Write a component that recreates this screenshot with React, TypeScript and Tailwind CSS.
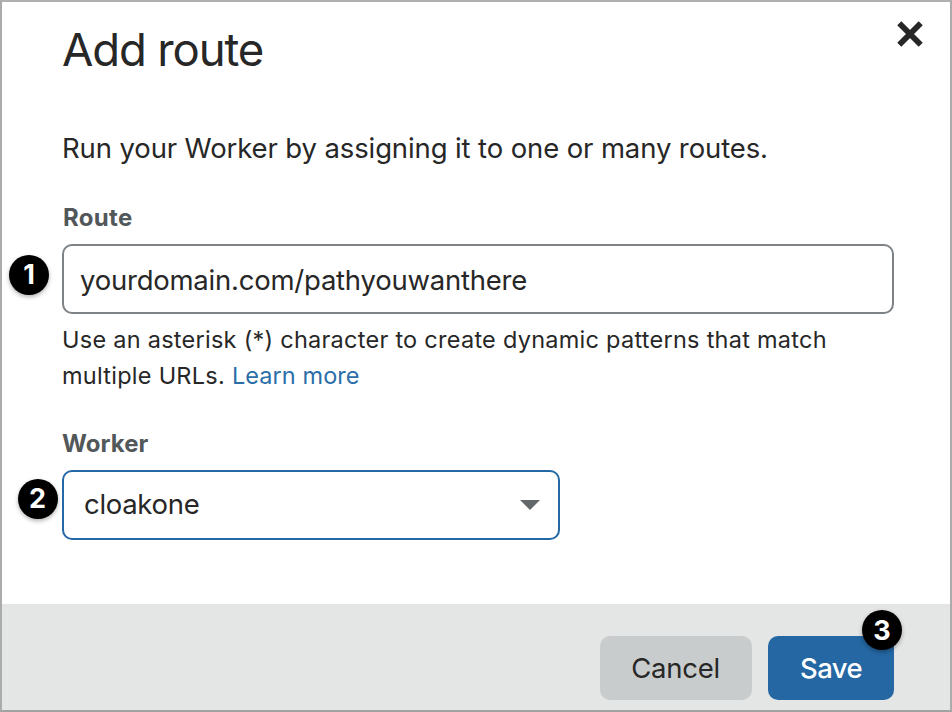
import React from "react";

function Badge({ n, className }: { n: number; className: string }) {
  return (
    <span className={`absolute flex h-[40px] w-[40px] items-center justify-center rounded-full bg-black font-['Inter',sans-serif] text-[27px] leading-none font-bold tracking-normal text-white shadow-[0_2px_4px_rgba(0,0,0,0.3)] ${className}`}>
      {n}
    </span>
  );
}

export default function App() {
  return (
    <div className="flex h-[712px] w-[952px] flex-col overflow-hidden border-2 border-t-[#b0b0b0] border-r-[#ababab] border-b-[#a2a2a2] border-l-[#ababab] bg-white font-['Inter',sans-serif] text-[#272727]">
      <header className="flex h-[94px] justify-between pr-[27px] pl-[60px]">
        <h1 className="mt-[18px] text-[45.5px] leading-[60px] tracking-[-1.15px] whitespace-nowrap">Add route</h1>
        <button aria-label="Close" className="mt-[19px] h-[26px] w-[26px]">
          <svg viewBox="0 0 26 26" className="h-[26px] w-[26px]" stroke="#272727" strokeWidth="5.8">
            <path d="M2.3 2.3L23.7 23.7M23.7 2.3L2.3 23.7" />
          </svg>
        </button>
      </header>
      <main className="flex h-[508px] flex-col pl-[60px]">
        <p className="mt-[32px] text-[27.5px] leading-[40px] tracking-[-0.12px] whitespace-nowrap">Run your Worker by assigning it to one or many routes.</p>
        <label className="mt-[34px] pl-px text-[24px] leading-[32px] font-bold tracking-[0.3px] text-[#52575a]">Route</label>
        <div className="relative mt-[10px] flex h-[70px] w-[832px] items-center rounded-[10px] border-2 border-[#7d8287] pt-[3px] pl-[16px] text-[27.5px] tracking-[-0.23px]">
          <span>yourdomain.com/pathyouwanthere</span>
          <Badge n={1} className="top-[8.5px] left-[-55px]" />
        </div>
        <p className="mt-[8px] text-[23.5px] leading-[36px] tracking-[0.26px] whitespace-nowrap">
          Use an asterisk (*) character to create dynamic patterns that match<br />
          multiple URLs. <a className="tracking-[0.08px] text-[#2b6ea8]">Learn more</a>
        </p>
        <label className="mt-[34px] text-[24px] leading-[32px] font-bold tracking-[0.05px] text-[#52575a]">Worker</label>
        <div className="relative mt-[10px] flex h-[70px] w-[498px] items-center justify-between rounded-[10px] border-2 border-[#2469a5] pr-[18px] pl-[20px] text-[27.5px] tracking-[-0.3px]">
          <span>cloakone</span>
          <svg viewBox="0 0 20 10" className="h-[10px] w-[20px]"><path d="M0 0H20L10 10Z" fill="#62676a" /></svg>
          <Badge n={2} className="top-[6.5px] left-[-46.5px]" />
        </div>
      </main>
      <footer className="flex flex-1 justify-end gap-[16px] bg-[#e4e6e5] pt-[32px] pr-[56px] text-[27.5px]">
        <button className="h-[64px] w-[152px] rounded-[10px] bg-[#c9cccd] pt-[2px] pr-[1px] tracking-[-0.25px]">Cancel</button>
        <button className="relative h-[64px] w-[126px] rounded-[10px] bg-[#2467a2] pt-[2px] font-medium tracking-[-0.6px] text-white">
          Save
          <Badge n={3} className="top-[-26px] left-[94px]" />
        </button>
      </footer>
    </div>
  );
}
